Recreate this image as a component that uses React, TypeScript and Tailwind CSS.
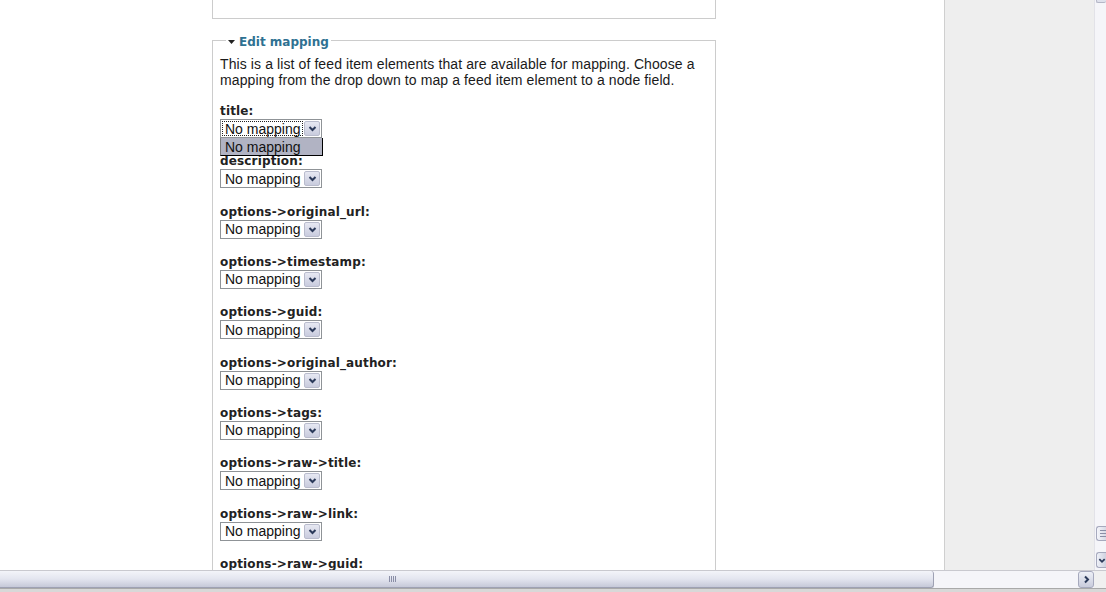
import React from 'react';

const fields = [
  'title',
  'description',
  'options->original_url',
  'options->timestamp',
  'options->guid',
  'options->original_author',
  'options->tags',
  'options->raw->title',
  'options->raw->link',
  'options->raw->guid',
];

function Chevron({ dir = 'down' }: { dir?: 'down' | 'right' }) {
  return (
    <svg width="9" height="9" viewBox="0 0 9 9" className="block">
      {dir === 'down' ? (
        <path d="M1.5 3 L4.5 6 L7.5 3" fill="none" stroke="#2b3a5a" strokeWidth="2" />
      ) : (
        <path d="M3 1.5 L6 4.5 L3 7.5" fill="none" stroke="#2b3a5a" strokeWidth="2" />
      )}
    </svg>
  );
}

function MappingSelect({ open }: { open?: boolean }) {
  return (
    <div className="relative flex h-[19px] w-[102px] border border-[#8f9397] bg-white">
      <div className="flex-1 p-[1px]">
        <div
          className={
            'flex h-full items-center pl-[2px] text-[14px] leading-none text-[#111] ' +
            (open ? 'border border-dotted border-[#222]' : 'border border-transparent')
          }
        >
          No mapping
        </div>
      </div>
      <div className="my-[1px] mr-[1px] flex w-[16px] items-center justify-center rounded-[2px] border border-[#b9bccd] bg-gradient-to-b from-[#e6e8f2] to-[#c9ccde]">
        <Chevron />
      </div>
      {open && (
        <div className="absolute left-[-1px] top-[18px] z-10 flex h-[18px] w-[103px] items-center border-b border-r border-l border-b-black border-r-black border-l-[#7c7c7c] bg-[#b1b3c3] pl-[4px] text-[14px] leading-none text-[#111]">
          No mapping
        </div>
      )}
    </div>
  );
}

export default function App() {
  return (
    <div className="flex h-[592px] w-[1106px] flex-col overflow-hidden bg-white font-['Liberation_Sans',Arial,sans-serif]">
      <div className="flex h-[570px]">
        {/* page body */}
        <div className="w-[944px] overflow-hidden pl-[212px]">
          <div className="h-[19px] w-[504px] border-b border-l border-r border-[#cccccc]" />

          <fieldset className="mt-[11px] w-[504px] border border-[#cccccc] px-[7px] pt-[6px]">
            <legend className="ml-[6px] flex items-center gap-[4px] px-[2px] pt-[4px] font-['DejaVu_Sans',Verdana,sans-serif] text-[12px] font-bold leading-[16px] text-[#2f7192]">
              <svg width="7" height="4" viewBox="0 0 7 4" className="block">
                <path d="M0 0 H7 L3.5 4 Z" fill="#222" />
              </svg>
              Edit mapping
            </legend>

            <p className="mb-[15px] text-[14px] leading-[16px] tracking-[0.1px] text-[#1a1a1a]">
              This is a list of feed item elements that are available for mapping. Choose a mapping from the drop down to map a feed item element to a node field.
            </p>

            {fields.map((f, i) => (
              <div key={f} className="mb-[15.33px]">
                <div className="font-['DejaVu_Sans',Verdana,sans-serif] text-[12px] font-bold leading-[16px] tracking-[0.15px] text-[#222]">
                  {f}:
                </div>
                <MappingSelect open={i === 0} />
              </div>
            ))}
          </fieldset>
        </div>

        {/* grey sidebar */}
        <div className="flex-1 border-l border-[#cfcfcf] bg-[#eeeeee]" />

        {/* vertical scrollbar, partly cut off */}
        <div className="flex w-[12px] flex-col border-l border-[#e2e2e8] bg-[#f5f5f9]">
          <div className="ml-[1px] h-[3px] rounded-b-[2px] border-b border-l border-[#b4b6c6] bg-[#dfe1ec]" />
          <div className="flex-1" />
          <div className="ml-[1px] flex h-[15px] flex-col justify-center gap-[2px] rounded-l-[3px] border-y border-l border-[#a6a9bd] bg-gradient-to-r from-[#f4f5fa] to-[#d8dae6] pl-[3px]">
            <div className="h-px w-[6px] bg-[#8a8ea6]" />
            <div className="h-px w-[6px] bg-[#8a8ea6]" />
            <div className="h-px w-[6px] bg-[#8a8ea6]" />
          </div>
          <div className="h-[11px]" />
          <div className="ml-[1px] flex h-[16px] items-center rounded-l-[3px] border-y border-l border-[#a6a9bd] bg-gradient-to-r from-[#eef0f7] to-[#cfd2e0] pl-[1px]">
            <Chevron />
          </div>
          <div className="h-[2px]" />
        </div>
      </div>

      {/* horizontal scrollbar */}
      <div className="flex h-[18px] border-t border-[#c9c9cf] bg-[#f5f5f9]">
        <div className="relative w-[934px] rounded-r-[3px] border-b border-r border-[#9ea1b3] bg-gradient-to-b from-[#f3f4f9] via-[#e3e5ef] to-[#c6c9d8]">
          <div className="absolute left-[389px] top-[5px] flex gap-[1px]">
            <div className="h-[6px] w-px bg-[#8a8ea6]" />
            <div className="h-[6px] w-px bg-[#8a8ea6]" />
            <div className="h-[6px] w-px bg-[#8a8ea6]" />
            <div className="h-[6px] w-px bg-[#8a8ea6]" />
          </div>
        </div>
        <div className="flex-1" />
        <div className="flex w-[16px] items-center justify-center rounded-[3px] border border-[#a6a9bd] bg-gradient-to-b from-[#eef0f7] to-[#c9ccdc]">
          <Chevron dir="right" />
        </div>
        <div className="w-[12px] bg-[#f0f0f0]" />
      </div>
      <div className="h-[4px] border-t border-[#a9a9a9] bg-[#d8d8d8]" />
    </div>
  );
}
